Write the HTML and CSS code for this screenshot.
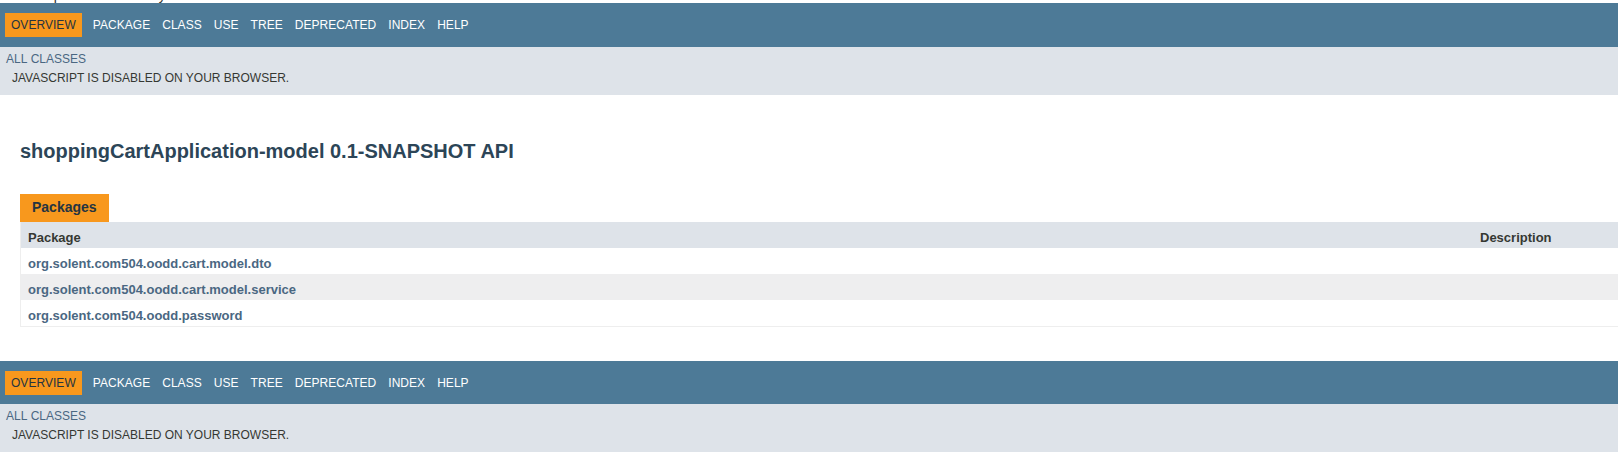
FILE: index.html
```html
<!DOCTYPE html>
<html lang="en">
<head>
<meta charset="utf-8">
<title>Overview (shoppingCartApplication-model 0.1-SNAPSHOT API)</title>
<link rel="stylesheet" href="styles.css">
</head>
<body>
<div class="noscript-top">JavaScript is disabled on your browser.</div>

<header class="nav-block">
  <nav class="top-nav">
    <ul class="nav-list">
      <li class="nav-current">Overview</li>
      <li>Package</li>
      <li>Class</li>
      <li>Use</li>
      <li><a href="#">Tree</a></li>
      <li><a href="#">Deprecated</a></li>
      <li><a href="#">Index</a></li>
      <li><a href="#">Help</a></li>
    </ul>
  </nav>
  <div class="sub-nav">
    <ul class="sub-list">
      <li><a href="#">All&nbsp;Classes</a></li>
    </ul>
    <div class="sub-div"><div class="sub-div">JavaScript is disabled on your browser.</div></div>
  </div>
</header>

<main class="main">
  <div class="header">
    <h1 class="title">shoppingCartApplication-model 0.1-SNAPSHOT API</h1>
  </div>
  <div class="content">
    <div class="tab-bar"><span class="tab">Packages</span></div>
    <table class="summary">
      <colgroup><col><col class="col-desc"></colgroup>
      <thead>
        <tr><th>Package</th><th>Description</th></tr>
      </thead>
      <tbody>
        <tr class="alt"><th><a href="#">org.solent.com504.oodd.cart.model.dto</a></th><td></td></tr>
        <tr class="stripe"><th><a href="#">org.solent.com504.oodd.cart.model.service</a></th><td></td></tr>
        <tr class="alt"><th><a href="#">org.solent.com504.oodd.password</a></th><td></td></tr>
      </tbody>
    </table>
  </div>
</main>

<footer class="nav-block">
  <nav class="top-nav">
    <ul class="nav-list">
      <li class="nav-current">Overview</li>
      <li>Package</li>
      <li>Class</li>
      <li>Use</li>
      <li><a href="#">Tree</a></li>
      <li><a href="#">Deprecated</a></li>
      <li><a href="#">Index</a></li>
      <li><a href="#">Help</a></li>
    </ul>
  </nav>
  <div class="sub-nav">
    <ul class="sub-list">
      <li><a href="#">All&nbsp;Classes</a></li>
    </ul>
    <div class="sub-div"><div class="sub-div">JavaScript is disabled on your browser.</div></div>
  </div>
</footer>
</body>
</html>
```
FILE: styles.css
```css
html {
  overflow: hidden;
}

body {
  margin: 0;
  padding: 0;
  background: #ffffff;
  color: #353833;
  font-family: "Liberation Sans", Arial, Helvetica, sans-serif;
  font-size: 14px;
}

a {
  text-decoration: none;
}

.noscript-top {
  margin-top: -13px;
}

.top-nav {
  background-color: #4d7a97;
  color: #ffffff;
  height: 33.6px;
  padding-top: 10px;
  overflow: hidden;
  font-size: 12px;
}

.nav-list {
  display: flex;
  margin: 0;
  padding: 0;
  list-style: none;
}

.nav-list li {
  padding: 5px 6px;
  text-transform: uppercase;
  letter-spacing: 0.04px;
}

.nav-list a {
  color: #ffffff;
}

.nav-list .nav-current {
  background-color: #f8981d;
  color: #253441;
  margin: 0 5px;
}

.sub-nav {
  background-color: #dee3e9;
  font-size: 12px;
  overflow: hidden;
}

.sub-list {
  margin: 0;
  padding: 0;
  list-style: none;
}

.sub-list li {
  padding: 5px 6px;
  text-transform: uppercase;
}

.sub-list a {
  color: #4a6782;
}

.sub-div {
  padding: 0 0 5px 6px;
  text-transform: uppercase;
}

.header {
  margin: 0 20px;
  padding: 35px 0 10px 0;
}

.title {
  margin: 10px 0 0 0;
  color: #2c4557;
  font-size: 20px;
  font-weight: bold;
}

.content {
  margin-left: 20px;
  padding: 21px 0 34px 0;
}

.tab-bar {
  display: flex;
}

.tab {
  height: 16px;
  padding: 5px 12px 7px 12px;
  background-color: #f8981d;
  color: #253441;
  font-weight: bold;
  white-space: nowrap;
}

.summary {
  width: 100%;
  table-layout: fixed;
  border-collapse: separate;
  border-spacing: 0;
  border-left: 1px solid #eeeeee;
  border-bottom: 1px solid #eeeeee;
  font-size: 13px;
}

.col-desc {
  width: 145px;
}

.summary th,
.summary td {
  text-align: left;
  vertical-align: top;
  padding: 8px 3px 3px 7px;
  white-space: nowrap;
}

.summary thead th {
  background-color: #dee3e9;
  color: #353833;
  font-weight: bold;
}

.summary tbody th {
  font-weight: normal;
}

.summary tbody a {
  color: #4a6782;
  font-weight: bold;
}

.summary .alt {
  background-color: #ffffff;
}

.summary .stripe {
  background-color: #eeeeef;
}
```
